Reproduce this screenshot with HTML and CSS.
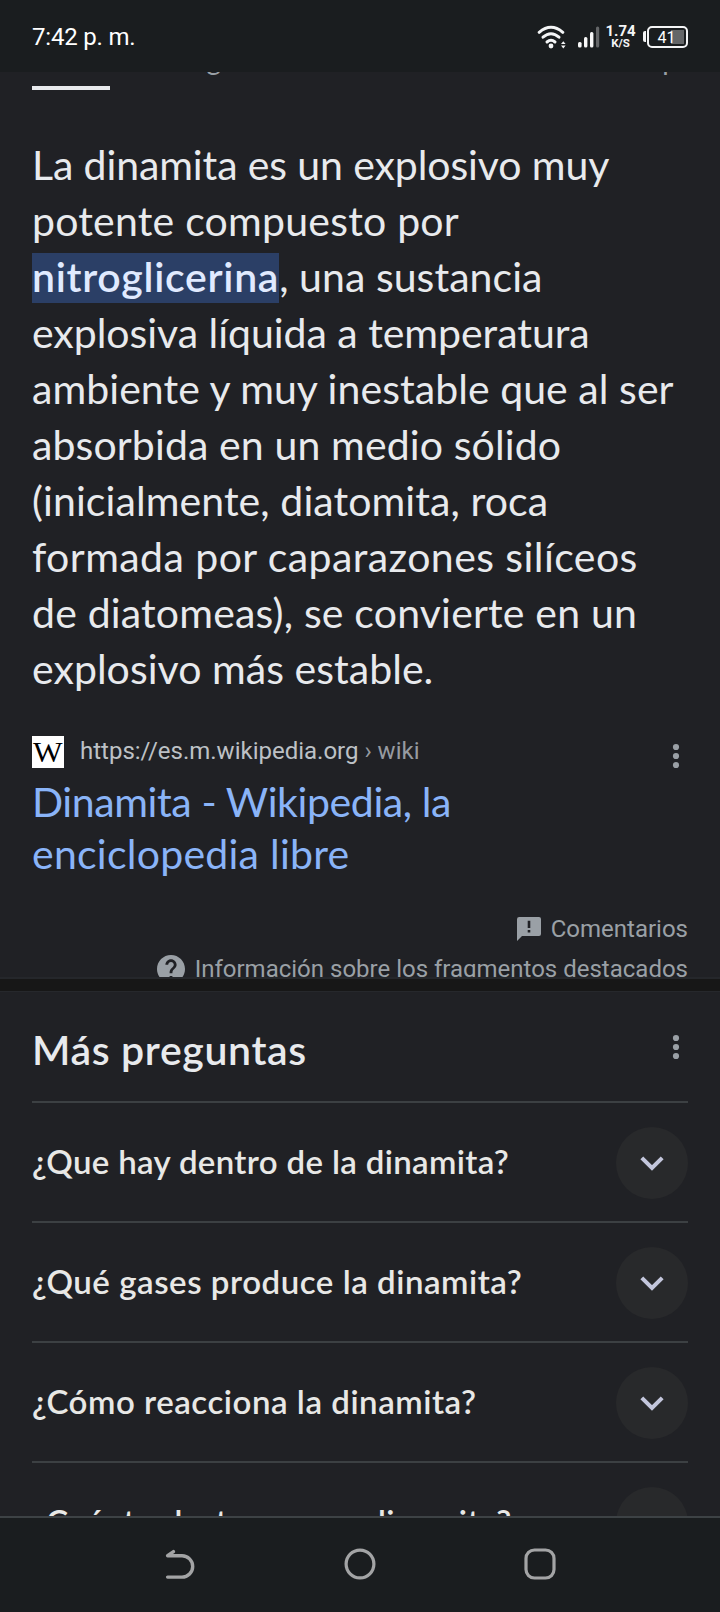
FILE: index.html
```html
<!DOCTYPE html>
<html lang="es">
<head>
<meta charset="utf-8">
<title>Dinamita</title>
<link rel="stylesheet" href="styles.css">
</head>
<body>
<div class="screen">
  <header class="status">
    <span class="time">7:42 p. m.</span>
    <div class="indicators">
      <svg class="wifi" width="30" height="24" viewBox="0 0 30 24" fill="none" stroke="#f4f5f6" stroke-width="3" stroke-linecap="round">
        <path d="M2.2 7.3Q14 -2.8 25.8 7.3"/><path d="M6 12.2Q14 5.4 22 12.2"/><path d="M10 17Q14 13.6 18 17"/>
        <circle cx="14" cy="21" r="2.4" fill="#f4f5f6" stroke="none"/>
        <path d="M24 19l2.3-2.8 2.3 2.8zM24 20.6l2.3 2.8 2.3-2.8z" fill="#f4f5f6" stroke="none"/>
      </svg>
      <svg class="signal" width="22" height="22" viewBox="0 0 22 22" fill="#f8f8f8">
        <rect x="0" y="16" width="3.6" height="5.5" rx="1.5"/><rect x="6" y="11" width="3.4" height="10.5" rx="1.5"/><rect x="12" y="6" width="3.4" height="15.5" rx="1.5"/><rect x="18" y="0.5" width="3.2" height="21" rx="1.5" fill="#646668"/>
      </svg>
      <div class="speed"><span class="rate">1.74</span><span class="unit">K/S</span></div>
      <div class="battery"><span class="nub"></span><span class="cell"><span class="level">41</span></span></div>
    </div>
  </header>

  <section class="result">
    <nav class="tabs">
      <span class="tab-active"></span>
      <span class="tab tab-images">Imágenes</span>
      <span class="tab tab-maps">Maps</span>
    </nav>
    <p class="answer">
      <span class="line a1">La dinamita es un explosivo muy</span>
      <span class="line a2">potente compuesto por</span>
      <span class="line a3"><b class="mark">nitroglicerina</b>, una sustancia</span>
      <span class="line a4">explosiva líquida a temperatura</span>
      <span class="line a5">ambiente y muy inestable que al ser</span>
      <span class="line a6">absorbida en un medio sólido</span>
      <span class="line a7">(inicialmente, diatomita, roca</span>
      <span class="line a8">formada por caparazones silíceos</span>
      <span class="line a9">de diatomeas), se convierte en un</span>
      <span class="line a10">explosivo más estable.</span>
    </p>
    <div class="source">
      <span class="favicon"><span class="favicon-letter">W</span></span>
      <span class="url">https://es.m.wikipedia.org<span class="crumb"> › wiki</span></span>
      <svg class="dots" width="8" height="26" viewBox="0 0 8 26" fill="#9aa0a6"><circle cx="4" cy="4" r="3.1"/><circle cx="4" cy="13" r="3.1"/><circle cx="4" cy="22" r="3.1"/></svg>
    </div>
    <h2 class="title"><span class="line t1">Dinamita - Wikipedia, la</span><span class="line t2">enciclopedia libre</span></h2>
    <div class="meta">
      <svg width="24" height="24" viewBox="0 0 24 24"><path d="M2.2 0H22a2 2 0 0 1 2 2v15a2 2 0 0 1-2 2H5l-5 5V2.200A2.200 2.200 0 0 1 2.200 0z" fill="#9aa0a6"/><path d="M10.700 3.700h2.600v7.300h-2.600zM10.700 13h2.600v2.600h-2.600z" fill="#202125"/></svg>
      <span>Comentarios</span>
    </div>
    <div class="meta about">
      <svg width="28" height="28" viewBox="2 2 20 20"><path fill="#9aa0a6" d="M12 2C6.480 2 2 6.480 2 12s4.480 10 10 10 10-4.480 10-10S17.520 2 12 2zm1 17h-2v-2h2v2zm2.070-7.750l-.9.920C13.450 12.900 13 13.500 13 15h-2v-.5c0-1.100.45-2.100 1.170-2.830l1.240-1.260c.37-.36.59-.86.59-1.410 0-1.100-.9-2-2-2s-2 .9-2 2H8c0-2.210 1.790-4 4-4s4 1.790 4 4c0 .88-.36 1.680-.93 2.250z"/></svg>
      <span>Información sobre los fragmentos destacados</span>
    </div>
  </section>

  <div class="divider"></div>

  <section class="questions">
    <div class="heading">
      <h3>Más preguntas</h3>
      <svg class="dots" width="8" height="26" viewBox="0 0 8 26" fill="#9aa0a6"><circle cx="4" cy="4" r="3.1"/><circle cx="4" cy="13" r="3.1"/><circle cx="4" cy="22" r="3.1"/></svg>
    </div>
    <div class="row"><span class="q1">¿Que hay dentro de la dinamita?</span><i class="toggle"><svg width="24" height="16" viewBox="0 0 24 16"><path d="M1.800 2.800L12 13 22.200 2.800" fill="none" stroke="#c3c6dc" stroke-width="4"/></svg></i></div>
    <div class="row"><span class="q2">¿Qué gases produce la dinamita?</span><i class="toggle"><svg width="24" height="16" viewBox="0 0 24 16"><path d="M1.800 2.800L12 13 22.200 2.800" fill="none" stroke="#c3c6dc" stroke-width="4"/></svg></i></div>
    <div class="row"><span class="q3">¿Cómo reacciona la dinamita?</span><i class="toggle"><svg width="24" height="16" viewBox="0 0 24 16"><path d="M1.800 2.800L12 13 22.200 2.800" fill="none" stroke="#c3c6dc" stroke-width="4"/></svg></i></div>
    <div class="row"><span class="q4">¿Cuánto destruye una dinamita?</span><i class="toggle"></i></div>
  </section>

  <footer class="navbar">
    <svg width="32" height="32" viewBox="0 0 32 32" fill="none" stroke="#a3a4a5" stroke-width="3.400" stroke-linecap="round" stroke-linejoin="round"><path d="M9.500 3.600L3.600 7.700H18a10.700 10.700 0 0 1 0 21.400H3.600"/></svg>
    <svg width="32" height="32" viewBox="0 0 32 32" fill="none" stroke="#a3a4a5" stroke-width="3.200"><circle cx="16" cy="16" r="13.900"/></svg>
    <svg width="32" height="32" viewBox="0 0 32 32" fill="none" stroke="#a3a4a5" stroke-width="3.200"><rect x="2" y="2" width="28" height="28" rx="8.500"/></svg>
  </footer>
</div>
</body>
</html>
```
FILE: styles.css
```css
* { box-sizing: border-box; }
body { margin: 0; background: #202125; color: #e8eaed; font-family: Lato, "Noto Sans", sans-serif; }
.screen { width: 720px; height: 1612px; display: flex; flex-direction: column; overflow: hidden; }

.status { height: 72px; flex: none; padding: 1px 32px 0; display: flex; align-items: center; justify-content: space-between; background: #1a1d1f; }
.time { font: 24px/28px Roboto, sans-serif; letter-spacing: -.2px; color: #fff; padding-top: 1px; }
.indicators { display: flex; align-items: center; height: 24px; }
.wifi { margin-right: 11px; }
.signal { margin-right: 6px; }
.speed { width: 29px; display: flex; flex-direction: column; align-items: center; font-family: Roboto, sans-serif; font-weight: 700; color: #f4f5f6; margin-right: 8px; }
.rate { font-size: 15px; line-height: 13px; }
.unit { font-size: 11.5px; line-height: 10px; }
.battery { display: flex; align-items: center; gap: 1px; }
.nub { width: 3px; height: 11px; border-radius: 2px 0 0 2px; background: #f4f5f6; }
.cell { width: 41px; height: 22px; border: 2px solid #f4f5f6; border-radius: 5px; padding: 2px; display: flex; }
.level { flex: 1; text-align: center; font: 16px/15px Roboto, sans-serif; color: #fff; background: linear-gradient(#646668, #646668) 100% 0 / 13px 100% no-repeat; padding-right: 2px; }

.result { height: 905px; flex: none; padding: 0 32px; overflow: hidden; }
.tabs { display: flex; height: 36px; margin-right: -2px; overflow: hidden; color: #9aa0a6; font-size: 28px; line-height: 34px; }
.tab-active { width: 78px; height: 4px; margin-top: 14px; background: #e8eaed; }
.tab { margin-top: -30px; height: 34px; }
.tab-images { margin-left: 52px; }
.tab-maps { margin-left: auto; }

.answer { margin: 29px 0 0; font-size: 41px; line-height: 56px; }
.line { display: block; white-space: nowrap; }
.mark { font-weight: 600; color: #e0eaff; letter-spacing: .7px; padding-bottom: 2px; background: linear-gradient(#2b3f66, #2b3f66) 0 100% / 100% 50px no-repeat; }
.a1 { letter-spacing: -.11px; }
.a2 { letter-spacing: .22px; }
.a3 { letter-spacing: .05px; }
.a4 { letter-spacing: -.03px; }
.a5 { letter-spacing: .06px; }
.a6 { letter-spacing: .12px; }
.a7 { letter-spacing: .09px; }
.a10 { letter-spacing: .04px; }
.a8 { letter-spacing: .43px; }
.a9 { letter-spacing: .18px; }

.source { display: flex; align-items: center; height: 38px; margin-top: 36px; }
.favicon { width: 32px; height: 32px; background: #fff; color: #000; font: 29px/33px "Liberation Serif", serif; display: flex; justify-content: center; margin-right: 16px; }
.favicon-letter { transform: scaleX(1.08); }
.url { flex: 1; font: 24px/28px Roboto, sans-serif; color: #bdc1c6; padding-bottom: 3px; }
.crumb { color: #969ba1; }
.source .dots { margin: 7px 8px 0 0; }
.title { margin: 5px 0 0; font-weight: 400; font-size: 41px; line-height: 52px; color: #8ab4f8; }
.t1 { letter-spacing: -.4px; }
.t2 { letter-spacing: .25px; }
.meta { display: flex; justify-content: flex-end; align-items: center; gap: 10px; height: 40px; margin-top: 29px; font: 24px/28px Roboto, sans-serif; color: #9aa0a6; }
.meta.about { margin-top: 0; }

.divider { height: 14px; flex: none; background: #171717; border-top: 2px solid #25272b; }

.questions { height: 525px; flex: none; padding: 0 32px; overflow: hidden; border-top: 1px solid #26282c; }
.heading { height: 109px; display: flex; justify-content: space-between; }
.heading h3 { margin: 0; padding-top: 30px; font-weight: 600; font-size: 41px; line-height: 56px; letter-spacing: .63px; }
.heading .dots { margin: 42px 8px 0 0; }
.row { height: 120px; border-top: 2px solid #3c4043; display: flex; align-items: center; justify-content: space-between; font-size: 33px; font-weight: 600; line-height: 40px; color: #e8e8e6; }
.row > span { padding-bottom: 2px; }
.q1 { letter-spacing: .35px; }
.q2, .q3 { letter-spacing: .54px; }
.q4 { letter-spacing: .46px; }
.toggle { width: 72px; height: 72px; border-radius: 50%; background: #28292b; display: flex; align-items: center; justify-content: center; margin-bottom: -1px; }

.navbar { flex: 1; border-top: 2px solid #3d4245; background: #1a1d1f; display: flex; justify-content: space-between; padding: 30px 164px 0; }
```
